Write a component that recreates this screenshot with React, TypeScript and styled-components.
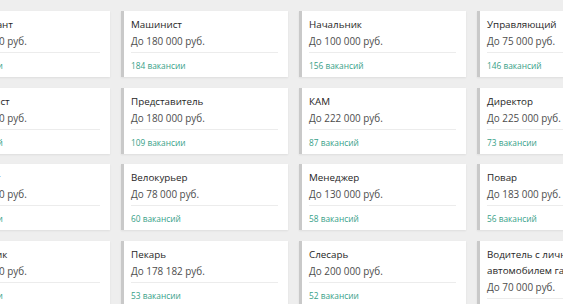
import React from "react";
import styled, { createGlobalStyle } from "styled-components";

const Global = createGlobalStyle`
  html, body {
    margin: 0;
    padding: 0;
    overflow: hidden;
    background: #eeeeee;
    font-family: "Open Sans", "Noto Sans", sans-serif;
  }
`;

const Page = styled.div`
  width: 563px;
  height: 304px;
  overflow: hidden;
`;

const Grid = styled.div`
  display: grid;
  grid-template-columns: repeat(4, 167px);
  column-gap: 11px;
  row-gap: 10.5px;
  margin-left: -57px;
  padding-top: 11px;
  width: 700px;
`;

const Card = styled.a`
  display: flex;
  flex-direction: column;
  align-self: start;
  min-height: 66px;
  box-sizing: border-box;
  background: #ffffff;
  border-left: 3px solid #c9c9c9;
  box-shadow: 0 1px 2px rgba(0, 0, 0, 0.07);
  padding: 6px 10px 4px 7px;
  text-decoration: none;
`;

const Title = styled.div`
  font-size: 9.8px;
  line-height: 16px;
  color: #262626;
`;

const Salary = styled.div`
  font-size: 9.9px;
  line-height: 16px;
  color: #4d4d4d;
`;

const Divider = styled.div`
  height: 1px;
  background: #ececec;
  margin: 3px 0 6px;
`;

const Count = styled.div`
  font-size: 8.3px;
  line-height: 14px;
  color: #36a087;
`;

type Job = { title: string; salary: string; count: string };

const jobs: Job[] = [
  { title: "Консультант", salary: "До 120 000 руб.", count: "99 вакансии" },
  { title: "Машинист", salary: "До 180 000 руб.", count: "184 вакансии" },
  { title: "Начальник", salary: "До 100 000 руб.", count: "156 вакансий" },
  { title: "Управляющий", salary: "До 75 000 руб.", count: "146 вакансий" },
  { title: "Специалист", salary: "До 150 000 руб.", count: "98 вакансий" },
  { title: "Представитель", salary: "До 180 000 руб.", count: "109 вакансии" },
  { title: "КАМ", salary: "До 222 000 руб.", count: "87 вакансий" },
  { title: "Директор", salary: "До 225 000 руб.", count: "73 вакансии" },
  { title: "Ассистент", salary: "До 140 000 руб.", count: "64 вакансии" },
  { title: "Велокурьер", salary: "До 78 000 руб.", count: "60 вакансий" },
  { title: "Менеджер", salary: "До 130 000 руб.", count: "58 вакансий" },
  { title: "Повар", salary: "До 183 000 руб.", count: "56 вакансий" },
  { title: "Упаковщик", salary: "До 110 000 руб.", count: "54 вакансии" },
  { title: "Пекарь", salary: "До 178 182 руб.", count: "53 вакансии" },
  { title: "Слесарь", salary: "До 200 000 руб.", count: "52 вакансии" },
  { title: "Водитель с личным автомобилем газель", salary: "До 70 000 руб.", count: "51 вакансия" },
];

export default function App() {
  return (
    <Page>
      <Global />
      <Grid>
        {jobs.map((j) => (
          <Card key={j.title} href="#">
            <Title>{j.title}</Title>
            <Salary>{j.salary}</Salary>
            <Divider />
            <Count>{j.count}</Count>
          </Card>
        ))}
      </Grid>
    </Page>
  );
}
